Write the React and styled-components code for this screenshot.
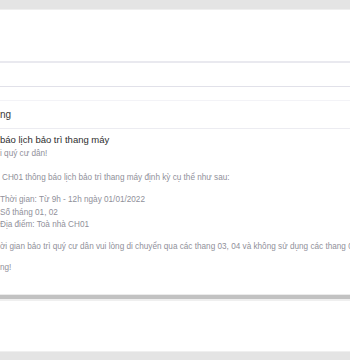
import React from "react";
import styled, { createGlobalStyle } from "styled-components";

const Global = createGlobalStyle`
  html, body { margin: 0; padding: 0; background: #ffffff; }
  body { font-family: "Liberation Sans", Arial, sans-serif; }
  #root { width: 350px; height: 360px; overflow: hidden; }
`;

const Page = styled.div`
  width: 350px;
  height: 360px;
  display: flex;
  flex-direction: column;
  background: #fff;
  overflow: hidden;
`;

const Band = styled.div`
  flex: 0 0 ${(p) => p.$h}px;
  background: #e4e4e4;
  border-${(p) => p.$edge}: 1px solid #efefef;
`;

const Blank = styled.div`
  flex: 0 0 ${(p) => p.$h}px;
  border-bottom: ${(p) => p.$line || "none"};
`;

const SubjectRow = styled.div`
  flex: 0 0 28px;
  display: flex;
  align-items: center;
  font-size: 10px;
  color: #3a3a3a;
  border-bottom: 1px solid #ececf1;
  box-sizing: border-box;
`;

const Mail = styled.div`
  flex: 0 0 auto;
  display: flex;
  flex-direction: column;
  padding-top: 4px;
  height: 164px;
  box-sizing: border-box;
`;

const Title = styled.div`
  font-size: 9.5px;
  color: #2e2e2e;
  line-height: 13px;
  margin-bottom: 2px;
`;

const Line = styled.div`
  font-size: 8.2px;
  color: #90909a;
  line-height: 12.5px;
  white-space: nowrap;
  padding-left: ${(p) => p.$indent || 0}px;
  margin-top: ${(p) => p.$gap || 0}px;
`;

const Scrollbar = styled.div`
  flex: 0 0 auto;
  border-top: 1px solid #ebebeb;
  margin-top: 1px;
  height: 4px;
  background: #c2c2c2;
  border-bottom: 2px solid #efefef;
`;

export default function App() {
  return (
    <Page>
      <Global />
      <Band $h={9} $edge="bottom" />
      <Blank $h={51} $line="2px solid #e9e9ef" />
      <Blank $h={23} $line="1px solid #e1e1e9" />
      <Blank $h={13} $line="1px solid #f3f3f7" />
      <SubjectRow>ng</SubjectRow>
      <Mail>
        <Title>báo lịch bảo trì thang máy</Title>
        <Line>i quý cư dân!</Line>
        <Line $gap={11} $indent={2}>CH01 thông báo lịch bảo trì thang máy định kỳ cụ thể như sau:</Line>
        <Line $gap={10}>Thời gian: Từ 9h - 12h ngày 01/01/2022</Line>
        <Line>Số tháng 01, 02</Line>
        <Line>Địa điểm: Toà nhà CH01</Line>
        <Line $gap={9}>ời gian bảo trì quý cư dân vui lòng di chuyển qua các thang 03, 04 và không sử dụng các thang 01, 02</Line>
        <Line $gap={9}>ng!</Line>
      </Mail>
      <Scrollbar />
      <Blank $h={50} />
      <Band $h={9} $edge="top" />
    </Page>
  );
}
